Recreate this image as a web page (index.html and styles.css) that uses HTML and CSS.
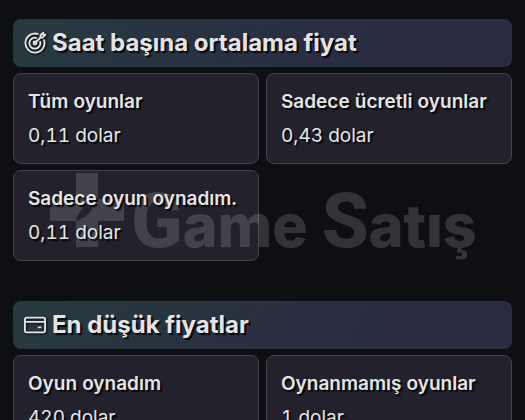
FILE: index.html
```html
<!DOCTYPE html>
<html lang="tr">
<head>
    <meta charset="UTF-8">
    <meta name="viewport" content="width=device-width, initial-scale=1.0">
    <title>Game Satış</title>
    <link rel="stylesheet" href="styles.css">
</head>
<body>
    <main class="container">
        <section class="stats">
            <h2 class="stats-title">
                <svg class="icon" viewBox="0 0 24 24" aria-hidden="true">
                    <path d="M21.6 8.2A10.4 10.4 0 1 1 15.8 2.4"/>
                    <path d="M17.4 10A6 6 0 1 1 14 6.6"/>
                    <circle cx="12" cy="12" r="1.6"/>
                    <path d="M12 12L18 6M18 6V3.5L21 .8V3L23.2 3L20.5 6Z"/>
                </svg>
                Saat başına ortalama fiyat
            </h2>
            <div class="cards">
                <div class="card">
                    <h3>Tüm oyunlar</h3>
                    <p>0,11 dolar</p>
                </div>
                <div class="card">
                    <h3>Sadece ücretli oyunlar</h3>
                    <p>0,43 dolar</p>
                </div>
                <div class="card">
                    <h3>Sadece oyun oynadım.</h3>
                    <p>0,11 dolar</p>
                </div>
            </div>
        </section>

        <section class="stats">
            <h2 class="stats-title">
                <svg class="icon" viewBox="0 0 24 24" aria-hidden="true">
                    <rect x="1" y="4" width="22" height="16" rx="2"/>
                    <path d="M1 8.5H23M15 14.5H19"/>
                </svg>
                En düşük fiyatlar
            </h2>
            <div class="cards">
                <div class="card">
                    <h3>Oyun oynadım</h3>
                    <p>420 dolar</p>
                </div>
                <div class="card">
                    <h3>Oynanmamış oyunlar</h3>
                    <p>1 dolar</p>
                </div>
            </div>
        </section>
    </main>

    <div class="watermark">
        <svg class="watermark-logo" viewBox="0 0 74 74" aria-hidden="true">
            <path d="M26 0H48V26H74V48H48V74H26V48H0V26H26ZM45 28Q30 33 26 48Q42 43 45 28Z" fill-rule="evenodd"/>
        </svg>
        <div class="watermark-name">
            <span class="watermark-word">Game</span>
            <span class="watermark-word">Satış</span>
        </div>
    </div>
</body>
</html>
```

FILE: styles.css
```css
* {
    box-sizing: border-box;
}
body {
    margin: 0;
    height: 100vh;
    overflow: hidden;
    position: relative;
    background-color: #0e0f13;
    color: #e4e4e4;
    font-family: Inter, sans-serif;
    text-shadow: 2px 2px 1px #08080b;
}
.container {
    display: flex;
    flex-direction: column;
    gap: 40px;
    padding: 19px 13px;
}
.stats {
    display: flex;
    flex-direction: column;
    gap: 6px;
}
.stats-title {
    display: flex;
    align-items: center;
    gap: 6px;
    margin: 0;
    padding: 8px 11px;
    border-radius: 8px;
    background: linear-gradient(120deg, #273a3f, #292e42 60%, #2a2a40);
    font-size: 24px;
    line-height: 32px;
}
.icon {
    width: 22px;
    height: 22px;
    fill: none;
    stroke: #e4e4e4;
    stroke-width: 2;
    stroke-linejoin: round;
    overflow: visible;
    filter: drop-shadow(1px 1px 1px #08080b);
}
.cards {
    display: grid;
    grid-template-columns: 1fr 1fr;
    gap: 6px 7px;
}
.card {
    padding: 11px 14px 10px;
    border: 1px solid #45444d;
    border-radius: 8px;
    background-color: #22212c;
    line-height: 34px;
}
.card h3,
.card p {
    position: relative;
    z-index: 1;
    margin: 0;
    font-size: 19px;
    font-variant-numeric: tabular-nums;
}
.card h3 {
    font-weight: 600;
}
.watermark {
    position: absolute;
    top: 173px;
    left: 50px;
    display: flex;
    gap: 7px;
    color: #fff;
    opacity: 0.15;
    text-shadow: none;
    pointer-events: none;
}
.watermark-logo {
    width: 74px;
    height: 74px;
    fill: #fff;
}
.watermark-name {
    display: flex;
    gap: 14px;
}
.watermark-word {
    display: block;
    font-size: 59px;
    font-weight: 800;
    line-height: 96px;
    white-space: nowrap;
}
.watermark-word::first-letter {
    font-family: Roboto, sans-serif;
    font-size: 76px;
}
```
